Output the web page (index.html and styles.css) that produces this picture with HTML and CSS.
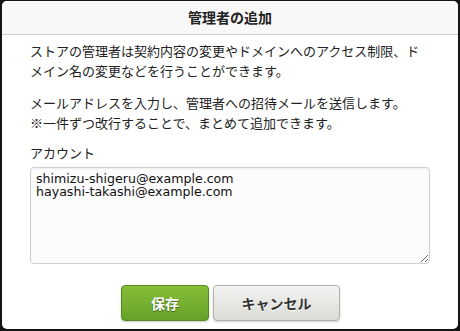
FILE: index.html
```html
<!DOCTYPE html>
<html lang="ja">
<head>
<meta charset="utf-8">
<link rel="stylesheet" href="styles.css">
</head>
<body>
<div class="dialog">
  <div class="dialog-header">管理者の追加</div>
  <div class="dialog-body">
    <p class="para">ストアの管理者は契約内容の変更やドメインへのアクセス制限、ドメイン名の変更などを行うことができます。</p>
    <p class="para para-second">メールアドレスを入力し、管理者への招待メールを送信します。<br>※一件ずつ改行することで、まとめて追加できます。</p>
    <label class="field-label" for="accounts">アカウント</label>
    <textarea id="accounts" class="field-input">shimizu-shigeru@example.com
hayashi-takashi@example.com</textarea>
    <div class="actions">
      <button class="btn btn-primary">保存</button>
      <button class="btn btn-secondary">キャンセル</button>
    </div>
  </div>
</div>
</body>
</html>
```
FILE: styles.css
```css
html, body {
  margin: 0;
  padding: 0;
  height: 100%;
}
body {
  background: #151515;
  font-family: "Noto Sans CJK JP", "DejaVu Sans", sans-serif;
  color: #222;
}
.dialog {
  margin: 1px 2px 0 2px;
  height: 328px;
  background: #fff;
  border-radius: 5px;
  overflow: hidden;
  display: flex;
  flex-direction: column;
}
.dialog-header {
  height: 33px;
  line-height: 33px;
  background: #f8f8f8;
  border-bottom: 1px solid #cfcfcf;
  text-align: center;
  font-weight: bold;
  font-size: 14px;
  color: #222;
}
.dialog-body {
  padding: 6px 28px 0 28px;
  display: flex;
  flex-direction: column;
}
.para {
  margin: 0 0 12px 0;
  font-size: 13px;
  line-height: 20px;
}
.para-second {
  margin-bottom: 10px;
}
.field-label {
  font-size: 13px;
  line-height: 20px;
  margin-bottom: 4px;
}
.field-input {
  box-sizing: border-box;
  width: 400px;
  height: 97px;
  margin: 0;
  padding: 4px 5px;
  border: 1px solid #cfcfcf;
  border-radius: 4px;
  background: #fcfcfc;
  box-shadow: inset 0 1px 2px rgba(0,0,0,0.06);
  font-family: "DejaVu Sans", sans-serif;
  font-size: 12.6px;
  line-height: 13px;
  color: #111;
  resize: vertical;
  outline: none;
}
.actions {
  display: flex;
  justify-content: center;
  gap: 4px;
  margin-top: 21px;
}
.btn {
  box-sizing: border-box;
  height: 36px;
  border-radius: 4px;
  font-family: "Noto Sans CJK JP", sans-serif;
  font-weight: bold;
  font-size: 14px;
  padding: 0;
  cursor: pointer;
  box-shadow: 0 1px 2px rgba(0,0,0,0.2);
}
.btn-primary {
  width: 88px;
  margin-left: 1px;
  color: #fff;
  background: linear-gradient(#86be35, #66a22b);
  border: 1px solid #55891f;
  text-shadow: 0 1px 1px rgba(0,0,0,0.45);
}
.btn-secondary {
  width: 127px;
  color: #333;
  background: linear-gradient(#f3f3f1, #dadad6);
  border: 1px solid #b0b0ac;
  text-shadow: 0 1px 0 #fff;
}
```
